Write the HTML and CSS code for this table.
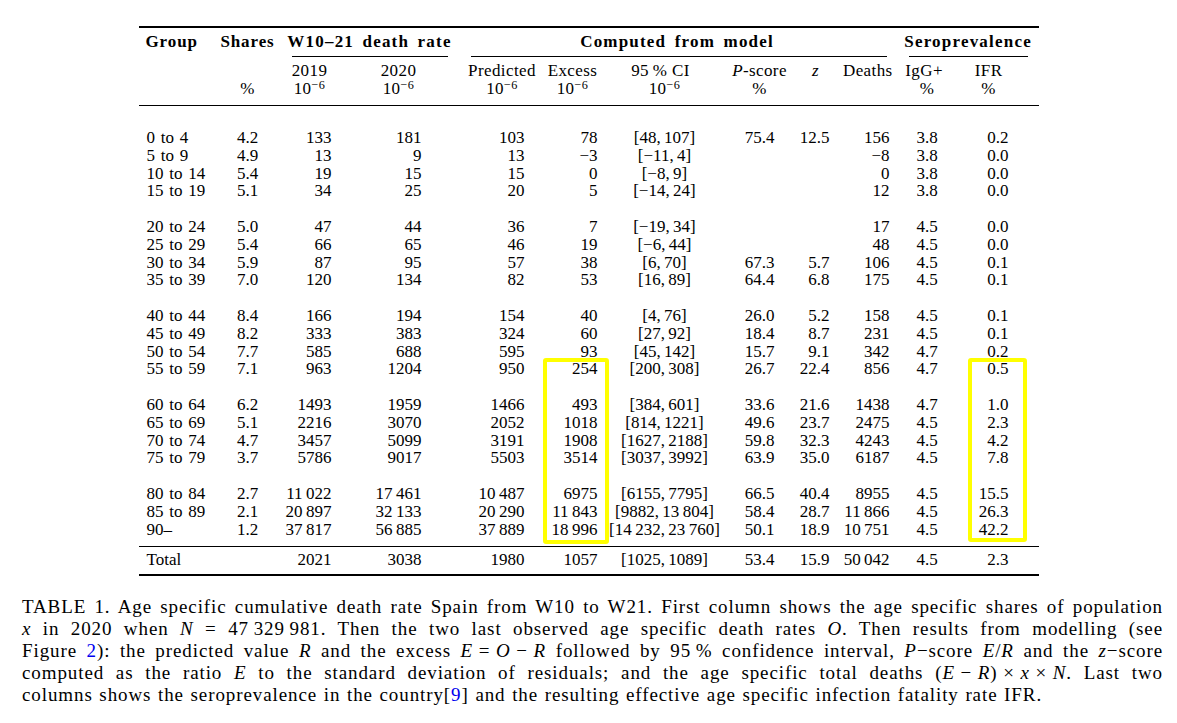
FILE: index.html
```html
<!DOCTYPE html>
<html lang="en">
<head>
<meta charset="utf-8">
<title>Table 1</title>
<link rel="stylesheet" href="styles.css">
</head>
<body>
<div class="page">
  <div class="tablewrap">
    <table class="tbl">
      <colgroup>
        <col class="w1"><col class="w2"><col class="w3"><col class="w4"><col class="w5"><col class="w6">
        <col class="w7"><col class="w8"><col class="w9"><col class="w10"><col class="w11"><col class="w12">
      </colgroup>
      <thead>
        <tr class="h1">
          <th class="hg">Group</th>
          <th class="hs">Shares</th>
          <th colspan="2" class="span"><div class="ht">W10–21 death rate</div><div class="cmid cm1"></div></th>
          <th colspan="6" class="span"><div class="ht">Computed from model</div><div class="cmid cm2"></div></th>
          <th colspan="2" class="span"><div class="ht">Seroprevalence</div><div class="cmid cm3"></div></th>
        </tr>
        <tr class="h2">
          <th></th><th></th><th>2019</th><th>2020</th><th>Predicted</th><th>Excess</th>
          <th>95&thinsp;% CI</th><th><i>P</i>-score</th><th><i>z</i></th><th>Deaths</th><th>IgG+</th><th>IFR</th>
        </tr>
        <tr class="h3">
          <th></th><th>%</th>
          <th><span class="e">10<sup>−6</sup></span></th>
          <th><span class="e">10<sup>−6</sup></span></th>
          <th><span class="e">10<sup>−6</sup></span></th>
          <th><span class="e">10<sup>−6</sup></span></th>
          <th><span class="e">10<sup>−6</sup></span></th>
          <th>%</th><th></th><th></th><th>%</th><th>%</th>
        </tr>
      </thead>
      <tbody>
        <tr class="lead"><td colspan="12"></td></tr>
        <tr><td>0 to 4</td><td>4.2</td><td>133</td><td>181</td><td>103</td><td>78</td><td>[48,&thinsp;107]</td><td>75.4</td><td>12.5</td><td>156</td><td>3.8</td><td>0.2</td></tr>
        <tr><td>5 to 9</td><td>4.9</td><td>13</td><td>9</td><td>13</td><td>−3</td><td>[−11,&thinsp;4]</td><td></td><td></td><td>−8</td><td>3.8</td><td>0.0</td></tr>
        <tr><td>10 to 14</td><td>5.4</td><td>19</td><td>15</td><td>15</td><td>0</td><td>[−8,&thinsp;9]</td><td></td><td></td><td>0</td><td>3.8</td><td>0.0</td></tr>
        <tr><td>15 to 19</td><td>5.1</td><td>34</td><td>25</td><td>20</td><td>5</td><td>[−14,&thinsp;24]</td><td></td><td></td><td>12</td><td>3.8</td><td>0.0</td></tr>
        <tr class="blank"><td colspan="12"></td></tr>
        <tr><td>20 to 24</td><td>5.0</td><td>47</td><td>44</td><td>36</td><td>7</td><td>[−19,&thinsp;34]</td><td></td><td></td><td>17</td><td>4.5</td><td>0.0</td></tr>
        <tr><td>25 to 29</td><td>5.4</td><td>66</td><td>65</td><td>46</td><td>19</td><td>[−6,&thinsp;44]</td><td></td><td></td><td>48</td><td>4.5</td><td>0.0</td></tr>
        <tr><td>30 to 34</td><td>5.9</td><td>87</td><td>95</td><td>57</td><td>38</td><td>[6,&thinsp;70]</td><td>67.3</td><td>5.7</td><td>106</td><td>4.5</td><td>0.1</td></tr>
        <tr><td>35 to 39</td><td>7.0</td><td>120</td><td>134</td><td>82</td><td>53</td><td>[16,&thinsp;89]</td><td>64.4</td><td>6.8</td><td>175</td><td>4.5</td><td>0.1</td></tr>
        <tr class="blank"><td colspan="12"></td></tr>
        <tr><td>40 to 44</td><td>8.4</td><td>166</td><td>194</td><td>154</td><td>40</td><td>[4,&thinsp;76]</td><td>26.0</td><td>5.2</td><td>158</td><td>4.5</td><td>0.1</td></tr>
        <tr><td>45 to 49</td><td>8.2</td><td>333</td><td>383</td><td>324</td><td>60</td><td>[27,&thinsp;92]</td><td>18.4</td><td>8.7</td><td>231</td><td>4.5</td><td>0.1</td></tr>
        <tr><td>50 to 54</td><td>7.7</td><td>585</td><td>688</td><td>595</td><td>93</td><td>[45,&thinsp;142]</td><td>15.7</td><td>9.1</td><td>342</td><td>4.7</td><td>0.2</td></tr>
        <tr><td>55 to 59</td><td>7.1</td><td>963</td><td>1204</td><td>950</td><td>254</td><td>[200,&thinsp;308]</td><td>26.7</td><td>22.4</td><td>856</td><td>4.7</td><td>0.5</td></tr>
        <tr class="blank"><td colspan="12"></td></tr>
        <tr><td>60 to 64</td><td>6.2</td><td>1493</td><td>1959</td><td>1466</td><td>493</td><td>[384,&thinsp;601]</td><td>33.6</td><td>21.6</td><td>1438</td><td>4.7</td><td>1.0</td></tr>
        <tr><td>65 to 69</td><td>5.1</td><td>2216</td><td>3070</td><td>2052</td><td>1018</td><td>[814,&thinsp;1221]</td><td>49.6</td><td>23.7</td><td>2475</td><td>4.5</td><td>2.3</td></tr>
        <tr><td>70 to 74</td><td>4.7</td><td>3457</td><td>5099</td><td>3191</td><td>1908</td><td>[1627,&thinsp;2188]</td><td>59.8</td><td>32.3</td><td>4243</td><td>4.5</td><td>4.2</td></tr>
        <tr><td>75 to 79</td><td>3.7</td><td>5786</td><td>9017</td><td>5503</td><td>3514</td><td>[3037,&thinsp;3992]</td><td>63.9</td><td>35.0</td><td>6187</td><td>4.5</td><td>7.8</td></tr>
        <tr class="blank"><td colspan="12"></td></tr>
        <tr><td>80 to 84</td><td>2.7</td><td>11&thinsp;022</td><td>17&thinsp;461</td><td>10&thinsp;487</td><td>6975</td><td>[6155,&thinsp;7795]</td><td>66.5</td><td>40.4</td><td>8955</td><td>4.5</td><td>15.5</td></tr>
        <tr><td>85 to 89</td><td>2.1</td><td>20&thinsp;897</td><td>32&thinsp;133</td><td>20&thinsp;290</td><td>11&thinsp;843</td><td>[9882,&thinsp;13&thinsp;804]</td><td>58.4</td><td>28.7</td><td>11&thinsp;866</td><td>4.5</td><td>26.3</td></tr>
        <tr><td>90–</td><td>1.2</td><td>37&thinsp;817</td><td>56&thinsp;885</td><td>37&thinsp;889</td><td>18&thinsp;996</td><td>[14&thinsp;232,&thinsp;23&thinsp;760]</td><td>50.1</td><td>18.9</td><td>10&thinsp;751</td><td>4.5</td><td>42.2</td></tr>
        <tr class="endgap"><td colspan="12"></td></tr>
        <tr class="total"><td>Total</td><td></td><td>2021</td><td>3038</td><td>1980</td><td>1057</td><td>[1025,&thinsp;1089]</td><td>53.4</td><td>15.9</td><td>50&thinsp;042</td><td>4.5</td><td>2.3</td></tr>
      </tbody>
    </table>
    <div class="hl hl-excess"></div>
    <div class="hl hl-ifr"></div>
  </div>

  <div class="caption">
    <div class="cl">TABLE 1. Age specific cumulative death rate Spain from W10 to W21. First column shows the age specific shares of population</div>
    <div class="cl"><i>x</i> in 2020 when <i>N</i> = 47&thinsp;329&thinsp;981. Then the two last observed age specific death rates <i>O</i>. Then results from modelling (see</div>
    <div class="cl">Figure <span class="ref">2</span>): the predicted value <i>R</i> and the excess <i>E</i>&#8197;=&#8197;<i>O</i>&#8197;−&#8197;<i>R</i> followed by 95&thinsp;% confidence interval, <i>P</i>−score <i>E</i>/<i>R</i> and the <i>z</i>−score</div>
    <div class="cl">computed as the ratio <i>E</i> to the standard deviation of residuals; and the age specific total deaths (<i>E</i>&#8197;−&#8197;<i>R</i>)&#8197;×&#8197;<i>x</i>&#8197;×&#8197;<i>N</i>. Last two</div>
    <div class="cl last">columns shows the seroprevalence in the country[<span class="ref">9</span>] and the resulting effective age specific infection fatality rate IFR.</div>
  </div>
</div>
</body>
</html>
```

FILE: styles.css
```css
html, body {
  margin: 0;
  padding: 0;
  background: #fff;
}

body {
  font-family: "Liberation Serif", "Times New Roman", serif;
  color: #000;
}

.page {
  padding-top: 26px;
}

.tablewrap {
  position: relative;
  width: 900px;
  margin: 0 auto;
}

.tbl {
  width: 900px;
  table-layout: fixed;
  border-collapse: separate;
  border-spacing: 0;
  border-top: 2px solid #000;
  border-bottom: 2px solid #000;
  font-family: "Liberation Serif", "Times New Roman", serif;
  font-size: 17px;
  white-space: nowrap;
}

.w1 { width: 74px; }
.w2 { width: 70px; }
.w3 { width: 58px; }
.w4 { width: 116px; }
.w5 { width: 87px; }
.w6 { width: 61px; }
.w7 { width: 120px; }
.w8 { width: 70px; }
.w9 { width: 42px; }
.w10 { width: 61px; }
.w11 { width: 59px; }
.w12 { width: 82px; }

.tbl th,
.tbl td {
  padding: 0;
  font-weight: normal;
  line-height: 17.8px;
  vertical-align: top;
}

/* header row 1 */
.h1 th {
  font-weight: bold;
  letter-spacing: 1.2px;
  word-spacing: 3px;
  padding-top: 5px;
  line-height: 18px;
  text-align: center;
}
.h1 .hg { text-align: left; padding-left: 7px; letter-spacing: 0.9px; }
.h1 .hs { text-align: center; letter-spacing: 0.9px; }

.cmid {
  border-top: 1px solid #000;
  margin-top: 5px;
  height: 0;
}
.cm1 { margin-left: 9px; margin-right: 9px; }
.cm2 { margin-left: 14px; margin-right: 11px; }
.cm3 { margin-left: 11px; margin-right: 11px; }

/* header rows 2 and 3 */
.h2 th,
.h3 th {
  line-height: 18px;
  text-align: center;
  letter-spacing: 0.4px;
}
.h2 th { padding-top: 5px; }
.h3 th {
  padding-bottom: 7px;
  border-bottom: 1px solid #000;
}

.h2 th:nth-child(3), .h3 th:nth-child(3) { padding-right: 4px; }
.h2 th:nth-child(5), .h3 th:nth-child(5) { padding-left: 4px; }
.h2 th:nth-child(6), .h3 th:nth-child(6) { padding-right: 3px; }
.h2 th:nth-child(7) { padding-right: 8px; }
.h2 th:nth-child(10), .h3 th:nth-child(10) { text-align: right; padding-right: 5px; }
.h2 th:nth-child(11) { padding-right: 6px; }
.h3 th:nth-child(11) { padding-right: 0; }
.h2 th:nth-child(12), .h3 th:nth-child(12) { padding-right: 18px; }

.e sup {
  font-size: 0.72em;
  vertical-align: 0.42em;
  line-height: 0;
}

/* body */
.lead td { height: 23.1px; line-height: 0; }
.blank td { height: 17.8px; }
.endgap td { height: 8px; line-height: 0; }

.tbl tbody td { text-align: right; }
.tbl tbody td:nth-child(1) { text-align: left; padding-left: 8px; word-spacing: 1.5px; }
.tbl tbody td:nth-child(2) { text-align: center; }
.tbl tbody td:nth-child(3) { padding-right: 9px; }
.tbl tbody td:nth-child(4) { padding-right: 35px; }
.tbl tbody td:nth-child(5) { padding-right: 19px; }
.tbl tbody td:nth-child(6) { padding-right: 7px; }
.tbl tbody td:nth-child(7) { text-align: center; }
.tbl tbody td:nth-child(8) { padding-right: 20px; }
.tbl tbody td:nth-child(9) { padding-right: 7px; }
.tbl tbody td:nth-child(10) { padding-right: 8px; }
.tbl tbody td:nth-child(11) { text-align: center; }
.tbl tbody td:nth-child(12) { padding-right: 30px; }
.tbl tbody tr.lead td,
.tbl tbody tr.blank td,
.tbl tbody tr.endgap td { padding: 0; }

.tbl tbody tr.total td {
  border-top: 1px solid #000;
  padding-top: 4px;
  padding-bottom: 5px;
}

/* yellow highlight boxes */
.hl {
  position: absolute;
  box-sizing: border-box;
  border: 4px solid #ffff00;
  border-radius: 3px;
}
.hl-excess { left: 404px; top: 332px; width: 66px; height: 186px; }
.hl-ifr { left: 829px; top: 332px; width: 59px; height: 184px; }

/* caption */
.caption {
  width: 1141px;
  margin: 20px 0 0 22px;
  font-size: 19px;
  line-height: 22px;
  letter-spacing: 0.9px;
  word-spacing: 1px;
}
.cl {
  text-align: justify;
  text-align-last: justify;
  white-space: nowrap;
}
.cl.last {
  text-align-last: left;
}
.ref { color: #0000ee; }
```
